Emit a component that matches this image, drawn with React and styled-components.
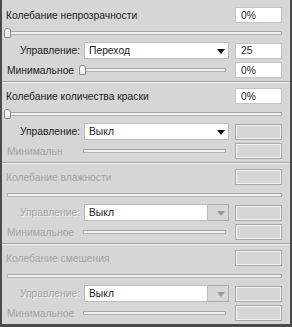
import React from "react";
import styled, { createGlobalStyle, css } from "styled-components";

const Global = createGlobalStyle`
  html, body { margin: 0; padding: 0; background: #d6d6d6; }
  body { font-family: "Liberation Sans", Arial, sans-serif; font-size: 10.3px; }
`;

const sections = [
  {
    title: "Колебание непрозрачности",
    value: "0%",
    on: true,
    control: "Переход",
    controlOn: true,
    controlValue: "25",
    minLabel: "Минимальное",
    minOn: true,
    minValue: "0%",
  },
  {
    title: "Колебание количества краски",
    value: "0%",
    on: true,
    control: "Выкл",
    controlOn: true,
    minLabel: "Минимальн",
  },
  { title: "Колебание влажности", control: "Выкл", minLabel: "Минимальное" },
  { title: "Колебание смешения", control: "Выкл", minLabel: "Минимальное" },
];

export default function App() {
  return (
    <>
      <Global />
      <Panel>
        {sections.map((s, i) => (
          <Section key={i} $last={i === sections.length - 1}>
            <TitleRow>
              <Label $off={!s.on}>{s.title}</Label>
              <Field $off={!s.on}>{s.value}</Field>
            </TitleRow>
            <SliderRow>
              <Track>{s.on && <Thumb />}</Track>
            </SliderRow>
            <ControlRow>
              <ControlLabel $off={!s.controlOn}>Управление:</ControlLabel>
              <Select $off={!s.controlOn}>
                <SelectText $off={!s.controlOn}>{s.control}</SelectText>
                <Arrow $off={!s.controlOn} />
              </Select>
              <Field $off={!s.controlValue}>{s.controlValue}</Field>
            </ControlRow>
            <MinRow>
              <MinLabel $off={!s.minOn}>{s.minLabel}</MinLabel>
              <MinSlider>
                <Track>{s.minOn && <Thumb $small />}</Track>
              </MinSlider>
              <Field $off={!s.minOn}>{s.minValue}</Field>
            </MinRow>
          </Section>
        ))}
      </Panel>
    </>
  );
}

const Panel = styled.div`
  width: 292px;
  height: 327px;
  box-sizing: border-box;
  background: #d6d6d6;
  border-left: 2px solid #4b4b4b;
  border-right: 2px solid #4b4b4b;
  border-bottom: 3px solid #4b4b4b;
  padding-top: 2px;
  display: flex;
  flex-direction: column;
`;

const Section = styled.div`
  display: flex;
  flex-direction: column;
  padding: 5px 0 3px;
  ${(p) =>
    !p.$last &&
    css`
      border-bottom: 1px solid #a2a2a2;
      box-shadow: 0 1px 0 #f2f2f2;
      margin-bottom: 1px;
    `}
`;

const offText = css`
  color: ${(p) => (p.$off ? "#a4a4a4" : "#1c1c1c")};
`;

const Label = styled.span`
  ${offText};
  white-space: nowrap;
`;

const TitleRow = styled.div`
  height: 16px;
  display: flex;
  align-items: center;
  justify-content: space-between;
  padding: 0 8px 0 4px;
`;

const Field = styled.div`
  width: 47px;
  height: 16px;
  box-sizing: border-box;
  flex: none;
  padding: 0 5px;
  display: flex;
  align-items: center;
  color: #1b1b1b;
  ${(p) =>
    p.$off
      ? css`
          background: #d6d6d6;
          border: 1px solid #a9a9a9;
          box-shadow: inset 1px 1px 0 #f4f4f4, inset -1px -1px 0 #f4f4f4;
        `
      : css`
          background: #ffffff;
          border: 1px solid #c4c4c4;
        `}
`;

const SliderRow = styled.div`
  height: 19px;
  display: flex;
  align-items: center;
  padding: 0 8px 0 5px;
`;

const Track = styled.div`
  position: relative;
  flex: 1;
  height: 4px;
  box-sizing: border-box;
  border: 1px solid #b2b2b2;
  border-top-color: #a4a4a4;
  background: #f1f1f1;
`;

const Thumb = styled.div`
  position: absolute;
  left: ${(p) => (p.$small ? "-5px" : "-4px")};
  top: -4px;
  width: 7px;
  height: 10px;
  box-sizing: border-box;
  background: linear-gradient(#ffffff, #ececec);
  border: 1px solid #8c8c8c;
  border-radius: 3px 3px 1px 1px;
`;

const ControlRow = styled.div`
  height: 17px;
  display: flex;
  align-items: center;
  padding: 0 8px 0 2px;
  margin-bottom: 3px;
`;

const ControlLabel = styled.span`
  ${offText};
  width: 76px;
  text-align: right;
  margin-right: 4px;
  ${(p) => p.$off && "text-shadow: 1px 1px 0 #ededed;"}
`;

const Select = styled.div`
  flex: 1;
  height: 17px;
  box-sizing: border-box;
  margin-right: 6px;
  display: flex;
  align-items: center;
  border: 1px solid ${(p) => (p.$off ? "#acacac" : "#bdbdbd")};
  background: ${(p) => (p.$off ? "#d6d6d6" : "#ffffff")};
`;

const SelectText = styled.div`
  flex: 1;
  height: 100%;
  box-sizing: border-box;
  display: flex;
  align-items: center;
  padding-left: 4px;
  color: #1c1c1c;
  background: #ffffff;
  ${(p) =>
    p.$off &&
    css`
      margin: -1px 0 -1px -1px;
      height: 17px;
      border: 1px solid #bcbcbc;
    `}
`;

const Arrow = styled.div`
  width: 0;
  height: 0;
  margin: 1px 3px 0 9px;
  border-left: 4px solid transparent;
  border-right: 4px solid transparent;
  border-top: 5px solid ${(p) => (p.$off ? "#9a9a9a" : "#111111")};
`;

const MinRow = styled.div`
  height: 16px;
  display: flex;
  align-items: center;
  padding: 0 8px 0 5px;
`;

const MinLabel = styled.span`
  ${offText};
  width: 76px;
  white-space: nowrap;
  overflow: hidden;
`;

const MinSlider = styled.div`
  flex: 1;
  display: flex;
  align-items: center;
  margin-right: 9px;
`;
